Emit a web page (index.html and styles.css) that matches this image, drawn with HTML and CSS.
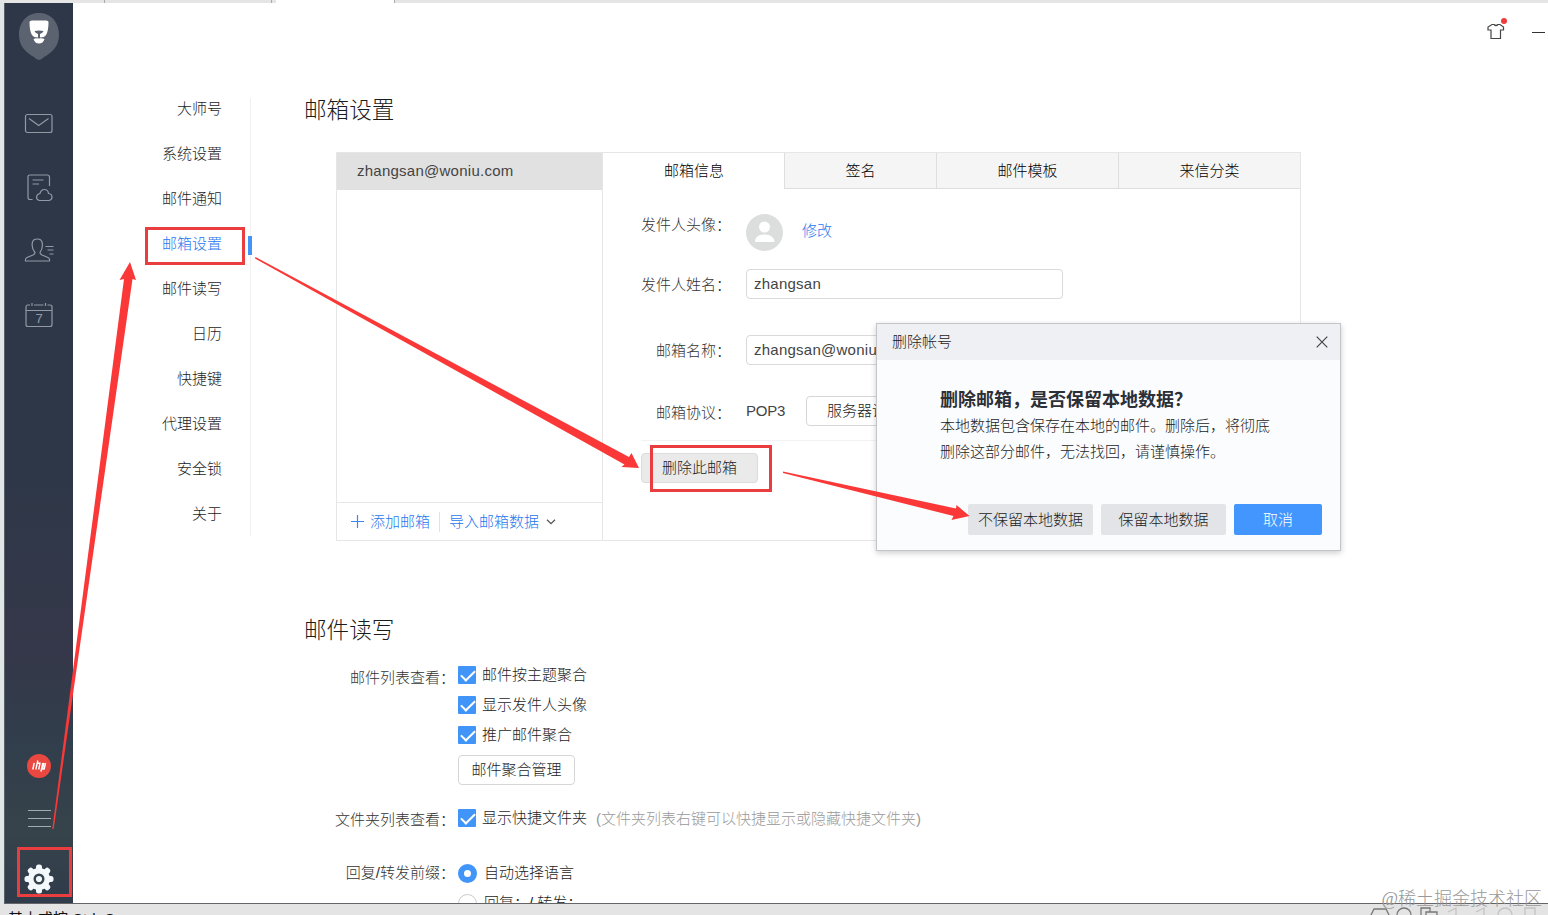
FILE: index.html
```html
<!DOCTYPE html>
<html lang="zh-CN">
<head>
    <meta charset="UTF-8">
    <meta name="viewport" content="width=device-width, initial-scale=1.0">
    <title>邮箱设置</title>
    <link rel="stylesheet" href="styles.css">
</head>
<body>
    <div class="topstrip">
        <span class="tick t1"></span>
        <span class="tick t2"></span>
        <span class="strip-tab"></span>
    </div>

    <div class="window">
        <aside class="sidebar">
            <svg class="logo" width="42" height="48" viewBox="0 0 42 48">
                <path d="M21 0C32 0 41 8 41 22C41 34 33 40 26 44Q21 50 16 44C9 40 1 34 1 22C1 8 10 0 21 0Z" fill="#5c6370"/>
                <path d="M11.500 9Q11.500 7.500 14 7.500H28Q30.500 7.500 30.500 9Q30.500 18 28 22Q26.500 24.500 22 24.500V21Q25 20 25.500 18Q21 17 16.500 18Q17 20 20 21V24.500Q15.500 24.500 14 22Q11.500 18 11.500 9Z" fill="#fff"/>
                <path d="M15.500 26Q18 25 21 25.500Q24 25 26.500 26Q25 30.500 21 30.500Q17 30.500 15.500 26Z" fill="#fff"/>
            </svg>
            <svg class="icon mail" width="30" height="22" viewBox="0 0 30 22">
                <rect x="1.500" y="1.500" width="26.500" height="18" rx="2"/>
                <path d="M5 5.500L14.700 12.500L24.500 5.500"/>
            </svg>
            <svg class="icon note" width="30" height="30" viewBox="0 0 30 30">
                <path d="M8.500 26.500H6Q4 26.500 4 24.500V4Q4 2 6 2H23Q25.500 2 25.500 4V13M8.500 7H19.500M8.500 11H15"/>
                <path d="M15.500 27.500Q12.500 27 12.500 24Q13 21 16 20.500Q17 16.500 20.500 16.500Q24 16.500 24.500 20.500Q28 21 28 24Q28 27 25 27.500Z"/>
            </svg>
            <svg class="icon person" width="30" height="26" viewBox="0 0 30 26">
                <path d="M11 15.500C8 12 7.500 9 8.500 5C9.500 1 17 1 18 5C19 9 18.500 12 16 15.500Q16 17 18 18L24 20.500Q26 21.500 25.500 24H1.500Q1 21.500 3 20.500L9 18Q11 17 11 15.500Z"/>
                <path d="M21.500 9.500H29.500M23.500 13H29.500M25.500 17H29.500"/>
            </svg>
            <svg class="icon cal" width="30" height="26" viewBox="0 0 30 26">
                <path d="M6 3H3.500Q2 3 2 5V22.500Q2 24.500 4 24.500H26Q28 24.500 28 22.500V5Q28 3 26 3H23.500M10 3H19.500M2 8.500H28M8 1V4M21.500 1V4"/>
                <text x="15" y="21" text-anchor="middle">7</text>
            </svg>
            <svg class="badge" width="24" height="24" viewBox="0 0 24 24">
                <circle cx="12" cy="12" r="12" fill="#e8483f"/>
                <path d="M5.800 15.500L7.200 9M8.800 15.500L10.800 6.500M11.700 15.500L13 9.200H10.800M14 17.500L15.800 9M16.800 9L15.500 15H17.200L18.500 9" fill="none" stroke="#fff" stroke-width="1.400"/>
            </svg>
            <div class="menu"><i></i><i></i><i></i></div>
            <svg class="gear" width="30" height="30" viewBox="-15 -15 30 30">
                <g fill="#f2f8fb">
                    <circle r="11"/>
                    <rect x="-3" y="-14.500" width="6" height="29" rx="2.500"/>
                    <rect x="-3" y="-14.500" width="6" height="29" rx="2.500" transform="rotate(45)"/>
                    <rect x="-3" y="-14.500" width="6" height="29" rx="2.500" transform="rotate(90)"/>
                    <rect x="-3" y="-14.500" width="6" height="29" rx="2.500" transform="rotate(135)"/>
                </g>
                <circle r="4.300" fill="none" stroke="#36424b" stroke-width="2.400"/>
            </svg>
        </aside>

        <ul class="nav">
            <li>大师号</li>
            <li>系统设置</li>
            <li>邮件通知</li>
            <li class="active">邮箱设置</li>
            <li>邮件读写</li>
            <li>日历</li>
            <li>快捷键</li>
            <li>代理设置</li>
            <li>安全锁</li>
            <li>关于</li>
        </ul>

        <main class="content">
            <h2>邮箱设置</h2>
            <div class="card">
                <div class="accounts">
                    <div class="account">zhangsan@woniu.com</div>
                    <div class="actions">
                        <svg width="13" height="13" viewBox="0 0 13 13"><path d="M6.500 0V13M0 6.500H13" stroke="#3a87ee" stroke-width="1.200"/></svg>
                        <span class="add">添加邮箱</span>
                        <span class="import">导入邮箱数据</span>
                        <svg width="10" height="6" viewBox="0 0 10 6"><path d="M1 .7L5 4.700L9 .7" fill="none" stroke="#555" stroke-width="1.300"/></svg>
                    </div>
                </div>
                <div class="detail">
                    <div class="tabs">
                        <div class="tab current">邮箱信息</div>
                        <div class="tab narrow">签名</div>
                        <div class="tab">邮件模板</div>
                        <div class="tab">来信分类</div>
                    </div>
                    <div class="form">
                        <div class="row avatar-row">
                            <label>发件人头像：</label>
                            <svg width="37" height="37" viewBox="0 0 37 37">
                                <circle cx="18.500" cy="18.500" r="18.500" fill="#dcdddd"/>
                                <circle cx="18.500" cy="13" r="5.500" fill="#fff"/>
                                <path d="M9 28Q9 20.500 18.500 20.500Q28 20.500 28.500 28Z" fill="#fff"/>
                            </svg>
                            <a class="edit">修改</a>
                        </div>
                        <div class="row name-row">
                            <label>发件人姓名：</label>
                            <div class="input">zhangsan</div>
                        </div>
                        <div class="row mailbox-row">
                            <label>邮箱名称：</label>
                            <div class="input">zhangsan@woniu.com</div>
                        </div>
                        <div class="row protocol-row">
                            <label>邮箱协议：</label>
                            <span class="pop">POP3</span>
                            <div class="btn">服务器设置</div>
                        </div>
                        <div class="delete">删除此邮箱</div>
                    </div>
                </div>
            </div>

            <h2 class="second">邮件读写</h2>
            <div class="option list-option">
                <label>邮件列表查看：</label>
                <div class="choices">
                    <div class="choice"><span class="check"></span>邮件按主题聚合</div>
                    <div class="choice"><span class="check"></span>显示发件人头像</div>
                    <div class="choice"><span class="check"></span>推广邮件聚合</div>
                    <div class="btn">邮件聚合管理</div>
                </div>
            </div>
            <div class="option folder-option">
                <label>文件夹列表查看：</label>
                <div class="choice"><span class="check"></span>显示快捷文件夹<span class="hint">(文件夹列表右键可以快捷显示或隐藏快捷文件夹)</span></div>
            </div>
            <div class="option reply-option">
                <label>回复/转发前缀：</label>
                <div class="choices">
                    <div class="choice"><span class="radio on"></span>自动选择语言</div>
                    <div class="choice"><span class="radio"></span>回复：/ 转发：</div>
                </div>
            </div>
        </main>

        <div class="tools">
            <svg width="20" height="24" viewBox="0 0 20 24">
                <path d="M5 6.500H7Q9 8.500 11 6.500H13L16.500 9V12H13.500V20.500H4V12H1V9Z" fill="none" stroke="#444" stroke-width="1.200"/>
                <circle cx="17" cy="3" r="3" fill="#ef3b3b"/>
            </svg>
            <span class="minimize"></span>
        </div>
    </div>

    <footer class="taskbar">
        <span class="mark">、</span><span>基本或按 Ctrl+C</span>
        <svg width="180" height="11" viewBox="0 0 180 11" fill="none" stroke="#777" stroke-width="1.300">
            <path d="M3 11L6 5H18L21 11M29 11A7 7 0 0 1 43 11M53 11V4H62V8M58 11V8H69V11"/>
            <path d="M80 8L88 4V11M108 8L116 4V11M130 11A7 7 0 0 1 144 11M157 11V4H167V11" stroke="#c3c3c3"/>
        </svg>
    </footer>

    <div class="dialog">
        <div class="dialog-head">
            <span>删除帐号</span>
            <svg width="12" height="12" viewBox="0 0 12 12"><path d="M.7 .7L11.300 11.300M11.300 .7L.7 11.300" stroke="#444" stroke-width="1.200"/></svg>
        </div>
        <div class="dialog-body">
            <h3>删除邮箱，是否保留本地数据？</h3>
            <p>本地数据包含保存在本地的邮件。删除后，将彻底<br>删除这部分邮件，无法找回，请谨慎操作。</p>
        </div>
        <div class="dialog-buttons">
            <div class="dbtn">不保留本地数据</div>
            <div class="dbtn">保留本地数据</div>
            <div class="dbtn primary">取消</div>
        </div>
    </div>

    <!-- step marks and arrows -->
    <svg class="marks" width="1548" height="915" viewBox="0 0 1548 915">
        <g fill="none" stroke="#ea3d3f" stroke-width="3">
            <rect x="146.500" y="228.500" width="97" height="35"/>
            <rect x="651.500" y="446.500" width="119" height="44"/>
            <rect x="18.500" y="848.500" width="52" height="47"/>
        </g>
        <g fill="#fa3838">
            <path d="M52.300 829L124 279L119.500 280L130 262L136 280L132.500 279L53.700 829Z"/>
            <path d="M255.500 257L629 457L631.500 453L639 468L621.500 467L624.500 464.500L255 258.500Z"/>
            <path d="M783 471.500L956 508.500L956.500 505L969.500 516L951.500 520L953.500 516L783 473Z"/>
        </g>
    </svg>

    <div class="watermark">@稀土掘金技术社区</div>
</body>
</html>
```
FILE: styles.css
```css
* {
    margin: 0;
    padding: 0;
    box-sizing: border-box;
}

body {
    height: 915px;
    display: flex;
    flex-direction: column;
    position: relative;
    overflow: hidden;
    background: #e0e6e5;
    color: #1c1c1c;
    font-family: "Liberation Sans", "Noto Sans CJK SC", sans-serif;
    font-size: 15px;
    font-weight: 300;
    line-height: 20px;
}

.topstrip {
    flex: none;
    height: 3px;
    display: flex;
    background: #e5e5e5;
}

.tick {
    border-right: 1px solid #aaa;
}

.t1 {
    width: 105px;
}

.t2 {
    width: 167px;
}

.strip-tab {
    width: 119px;
    margin-left: 4px;
    background: #fff;
    border-right: 1px solid #aaa;
}

.window {
    flex: none;
    height: 901px;
    margin-left: 4px;
    display: flex;
    background: #fff;
    border-left: 1px solid #59616a;
    border-bottom: 1px solid #656569;
    overflow: hidden;
}

/* sidebar */
.sidebar {
    flex: none;
    width: 68px;
    display: flex;
    flex-direction: column;
    align-items: center;
    background: linear-gradient(#2d3748 0%, #2d3747 50%, #35384a 72%, #313e4c 82%, #36434a 92%, #303b4b 100%);
}

.logo {
    margin-top: 10px;
}

.icon {
    fill: none;
    stroke: #9299a5;
    stroke-width: 1.2;
}

.icon text {
    font-size: 13px;
    fill: #9299a5;
    stroke: none;
}

.mail {
    margin-top: 52px;
}

.note {
    margin-top: 38px;
}

.person {
    margin-top: 34px;
}

.cal {
    margin-top: 39px;
}

.badge {
    margin-top: 426px;
}

.menu {
    width: 23px;
    margin-top: 32px;
    display: flex;
    flex-direction: column;
    gap: 7px;
}

.menu i {
    height: 1px;
    background: #a3abb0;
}

.gear {
    margin-top: 37px;
}

/* settings navigation */
.nav {
    flex: none;
    width: 178px;
    height: 438px;
    margin-top: 95px;
    padding-right: 28px;
    border-right: 1px solid #f0f0f0;
    list-style: none;
    text-align: right;
}

.nav li {
    height: 45px;
    line-height: 45px;
}

.nav li:first-child {
    margin-top: -12px;
}

.nav .active {
    position: relative;
    color: #1f78ee;
}

.nav .active::after {
    content: "";
    position: absolute;
    right: -30px;
    top: 15px;
    width: 4px;
    height: 19px;
    background: #4295f8;
}

.content {
    flex: none;
    width: 997px;
    margin-left: 53px;
    padding-top: 92px;
}

h2 {
    font-size: 22.6px;
    font-weight: 300;
    line-height: 32px;
}

/* account card */
.card {
    height: 389px;
    margin: 25px 0 0 32px;
    display: flex;
    border: 1px solid #e6e6e6;
}

.accounts {
    width: 266px;
    display: flex;
    flex-direction: column;
    justify-content: space-between;
    border-right: 1px solid #e6e6e6;
}

.account {
    height: 37px;
    padding-left: 20px;
    background: #e1e1e1;
    color: #444;
    line-height: 36px;
    letter-spacing: .25px;
}

.actions {
    height: 38px;
    display: flex;
    align-items: center;
    padding-left: 14px;
    border-top: 1px solid #e6e6e6;
    color: #1f78ee;
}

.add {
    margin-left: 6px;
    padding-right: 9px;
    border-right: 1px solid #e2e2e2;
}

.import {
    margin: 0 7px 0 9px;
}

.detail {
    flex: 1;
}

.tabs {
    height: 36px;
    display: flex;
    color: #000;
    line-height: 36px;
    text-align: center;
}

.tab {
    flex: 182;
    background: #f5f5f5;
    border-left: 1px solid #dedede;
    border-bottom: 1px solid #dedede;
}

.tab.narrow {
    flex: 152;
}

.tab.current {
    flex: 181;
    background: #fff;
    border-color: transparent;
}

.form {
    padding-left: 38px;
}

.row {
    display: flex;
    align-items: center;
}

/* half-width colon, padded back to the full column */
label {
    flex: none;
    padding-right: 7.5px;
    color: #333;
    font-feature-settings: "halt";
    text-align: right;
}

.row label {
    width: 90px;
    margin-right: 15px;
}

.avatar-row {
    margin-top: 25px;
}

.avatar-row label {
    margin-bottom: 16px;
}

.edit {
    margin: 0 0 4px 19px;
    color: #1f78ee;
}

.name-row {
    margin-top: 18px;
}

.mailbox-row {
    margin-top: 36px;
}

.name-row label,
.mailbox-row label {
    margin-top: 2px;
}

.protocol-row {
    width: 640px;
    height: 60px;
    margin-top: 16px;
    border-bottom: 1px solid #f2f2f2;
}

.protocol-row label {
    margin-top: 4px;
}

.input {
    width: 317px;
    height: 30px;
    padding-left: 7px;
    border: 1px solid #d9d9d9;
    border-radius: 4px;
    color: #444;
    line-height: 28px;
    letter-spacing: .25px;
}

.pop {
    width: 60px;
    color: #444;
    letter-spacing: -.2px;
}

.btn {
    width: 117px;
    height: 30px;
    border: 1px solid #d6d6d6;
    border-radius: 4px;
    background: #fff;
    line-height: 28px;
    text-align: center;
}

.delete {
    width: 117px;
    height: 30px;
    margin-top: 12px;
    border: 1px solid #dcdcdc;
    border-radius: 4px;
    background: #eaeaea;
    line-height: 28px;
    text-align: center;
}

/* reading and writing options */
.second {
    margin-top: 74px;
}

.option {
    display: flex;
    align-items: flex-start;
}

.option label {
    width: 151px;
    margin-right: 3px;
    line-height: 30px;
}

.list-option {
    margin-top: 13px;
}

.list-option label {
    padding-top: 3px;
}

.folder-option label {
    padding-top: 2px;
}

.folder-option {
    margin-top: 18px;
}

.reply-option {
    margin-top: 23px;
}

.choice {
    height: 30px;
    display: flex;
    align-items: center;
    white-space: nowrap;
}

.choices .btn {
    margin-top: 5px;
}

.check {
    width: 18px;
    height: 18px;
    margin-right: 6px;
    background: #4295f8;
    border-radius: 1px;
    position: relative;
}

.check::after {
    content: "";
    position: absolute;
    left: 6px;
    top: 1px;
    width: 6px;
    height: 12px;
    border: solid #fff;
    border-width: 0 2px 2px 0;
    transform: rotate(45deg);
}

.hint {
    margin: 2px 0 0 9px;
    color: #999;
}

.radio {
    width: 19px;
    height: 19px;
    margin-right: 7px;
    border: 1px solid #ccc;
    border-radius: 50%;
}

.radio.on {
    border: 6px solid #4295f8;
}

.tools {
    flex: none;
    display: flex;
    margin: 15px 0 0 186px;
}

.minimize {
    width: 13px;
    height: 1px;
    margin: 14px 0 0 25px;
    background: #333;
}

.taskbar {
    flex: none;
    height: 11px;
    display: flex;
    overflow: hidden;
    background: #e4e4e4;
    color: #111;
    font-weight: 400;
}

.taskbar span {
    margin-top: 5px;
}

.taskbar .mark {
    width: 8px;
    color: #2440c0;
    overflow: hidden;
}

.taskbar svg {
    margin-left: auto;
}

/* confirm dialog */
.dialog {
    position: absolute;
    left: 876px;
    top: 323px;
    width: 465px;
    height: 228px;
    background: #fbfcfe;
    border: 1px solid #c3c5c8;
    box-shadow: 0 2px 6px rgba(0, 0, 0, .2);
}

.dialog-head {
    height: 36px;
    display: flex;
    align-items: center;
    justify-content: space-between;
    padding: 0 12px 0 15px;
    background: #eff0f3;
}

.dialog-body {
    padding: 27px 0 0 63px;
}

h3 {
    color: #2c2f36;
    font-size: 18px;
    line-height: 26px;
}

.dialog-body p {
    line-height: 26px;
}

.dialog-buttons {
    display: flex;
    justify-content: flex-end;
    gap: 8px;
    margin: 39px 18px 0 0;
}

.dbtn {
    width: 125px;
    height: 31px;
    border-radius: 2px;
    background: #e2e4e8;
    line-height: 31px;
    text-align: center;
}

.dbtn.primary {
    width: 88px;
    background: #4296fd;
    color: #fff;
}

.marks {
    position: absolute;
    left: 0;
    top: 0;
    pointer-events: none;
}

.watermark {
    position: absolute;
    right: 6px;
    bottom: 4px;
    color: #999;
    font-family: "Liberation Serif", "Noto Sans CJK SC", serif;
    font-size: 18px;
    line-height: 24px;
}
```
